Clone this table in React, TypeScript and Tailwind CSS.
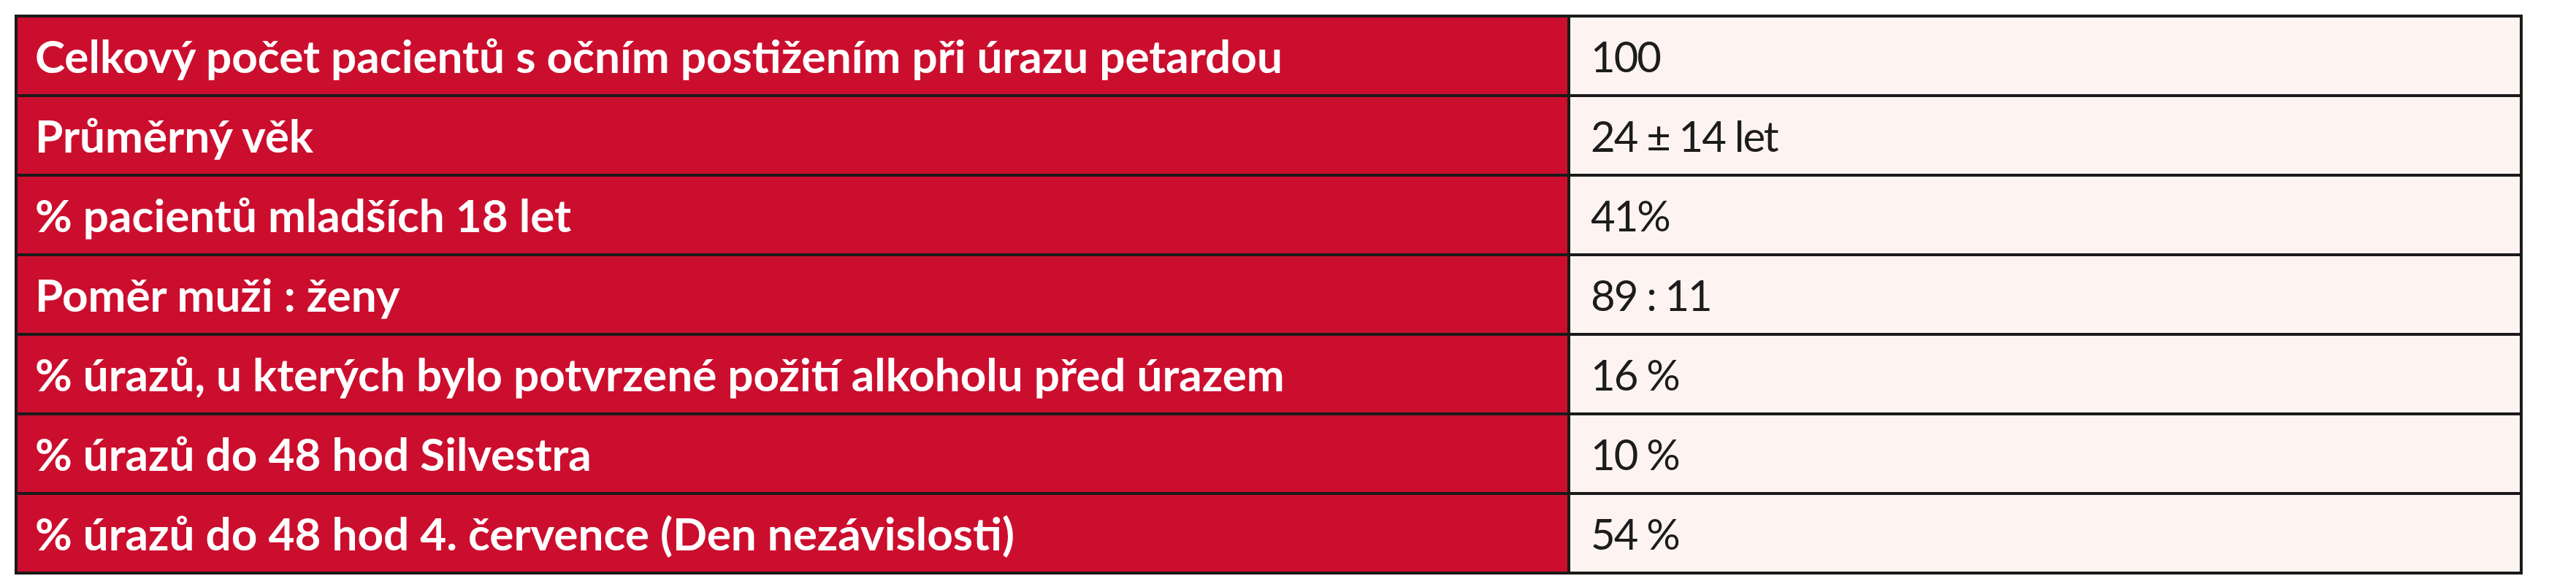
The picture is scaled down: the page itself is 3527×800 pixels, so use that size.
const rows: [string, string][] = [
  ["Celkový počet pacientů s očním postižením při úrazu petardou", "100"],
  ["Průměrný věk", "24 ± 14 let"],
  ["% pacientů mladších 18 let", "41%"],
  ["Poměr muži : ženy", "89 : 11"],
  ["% úrazů, u kterých bylo potvrzené požití alkoholu před úrazem", "16 %"],
  ["% úrazů do 48 hod Silvestra", "10 %"],
  ["% úrazů do 48 hod 4. července (Den nezávislosti)", "54 %"],
];

export default function App() {
  return (
    <div className="w-[3527px] h-[800px] bg-white pt-[20px] pl-[20px]">
      <table className="w-[3434px] border-collapse font-['Lato',sans-serif]">
        <tbody>
          {rows.map(([label, value]) => (
            <tr key={label} className="h-[109px]">
              <td className="w-[2126px] border-[4px] border-[#1a1a1a] bg-[#cc0e2e] pl-[24px] text-[62px] font-bold text-white align-middle">
                {label}
              </td>
              <td className="border-[4px] border-[#1a1a1a] bg-[#fdf4f2] pl-[28px] text-[58px] tracking-[-2px] text-[#1c1c1c] align-middle">
                {value}
              </td>
            </tr>
          ))}
        </tbody>
      </table>
    </div>
  );
}
